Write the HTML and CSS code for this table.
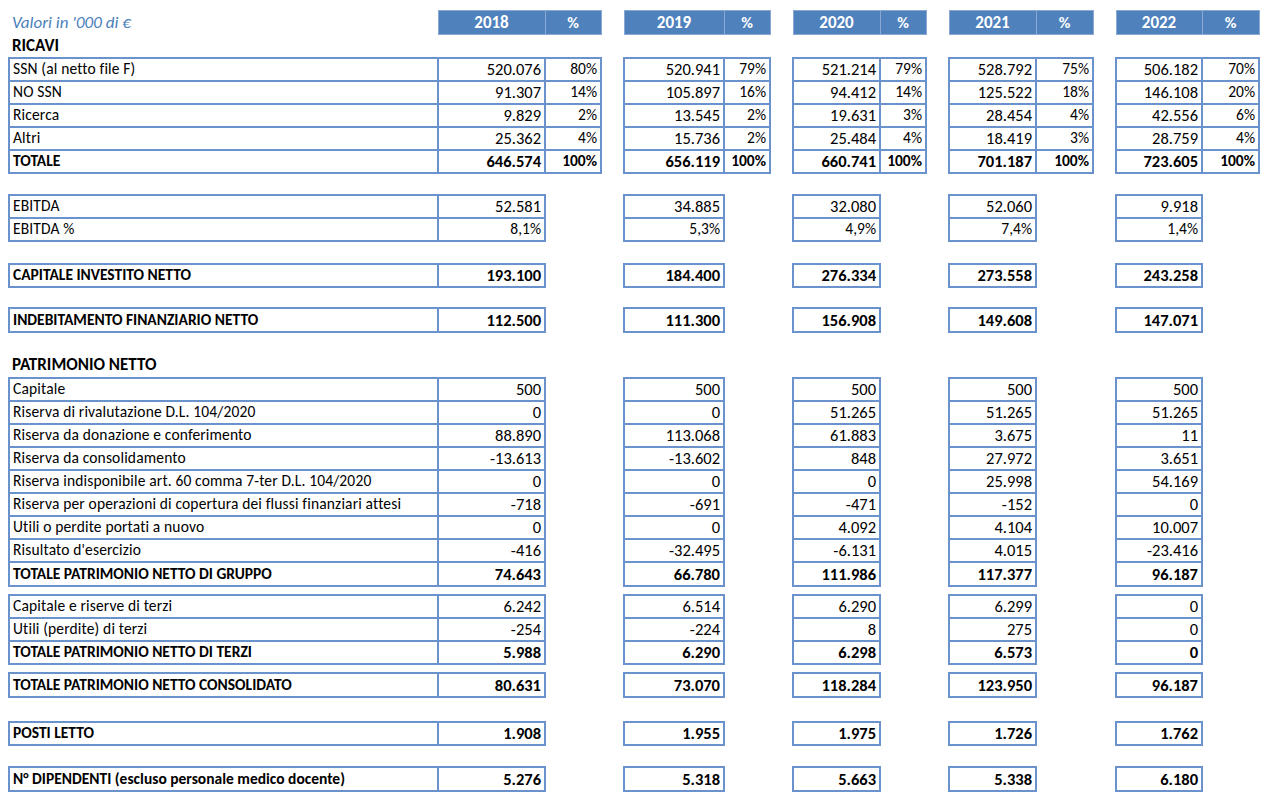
FILE: index.html
```html
<!DOCTYPE html>
<html lang="it">
<head>
<meta charset="utf-8">
<title>Valori in '000 di €</title>
<link rel="stylesheet" href="styles.css">
</head>
<body>
<table class="sheet">
  <colgroup>
    <col class="c-label">
    <col class="c-v18"><col class="c-p18"><col class="c-gap">
    <col class="c-v19"><col class="c-p19"><col class="c-gap">
    <col class="c-v20"><col class="c-p20"><col class="c-gap">
    <col class="c-v21"><col class="c-p21"><col class="c-gap">
    <col class="c-v22"><col class="c-p22">
  </colgroup>
  <tbody>
    <tr class="r-head">
      <td class="title">Valori in '000 di €</td>
      <td class="hd">2018</td><td class="hd hp">%</td><td></td>
      <td class="hd">2019</td><td class="hd hp">%</td><td></td>
      <td class="hd">2020</td><td class="hd hp">%</td><td></td>
      <td class="hd">2021</td><td class="hd hp">%</td><td></td>
      <td class="hd">2022</td><td class="hd hp">%</td>
    </tr>
    <tr class="r"><td class="sec" colspan="15">RICAVI</td></tr>
    <tr class="r">
      <td class="b lab">SSN (al netto file F)</td>
      <td class="b num">520.076</td><td class="b num pct">80%</td><td></td>
      <td class="b num">520.941</td><td class="b num pct">79%</td><td></td>
      <td class="b num">521.214</td><td class="b num pct">79%</td><td></td>
      <td class="b num">528.792</td><td class="b num pct">75%</td><td></td>
      <td class="b num">506.182</td><td class="b num pct">70%</td>
    </tr>
    <tr class="r">
      <td class="b lab">NO SSN</td>
      <td class="b num">91.307</td><td class="b num pct">14%</td><td></td>
      <td class="b num">105.897</td><td class="b num pct">16%</td><td></td>
      <td class="b num">94.412</td><td class="b num pct">14%</td><td></td>
      <td class="b num">125.522</td><td class="b num pct">18%</td><td></td>
      <td class="b num">146.108</td><td class="b num pct">20%</td>
    </tr>
    <tr class="r">
      <td class="b lab">Ricerca</td>
      <td class="b num">9.829</td><td class="b num pct">2%</td><td></td>
      <td class="b num">13.545</td><td class="b num pct">2%</td><td></td>
      <td class="b num">19.631</td><td class="b num pct">3%</td><td></td>
      <td class="b num">28.454</td><td class="b num pct">4%</td><td></td>
      <td class="b num">42.556</td><td class="b num pct">6%</td>
    </tr>
    <tr class="r">
      <td class="b lab">Altri</td>
      <td class="b num">25.362</td><td class="b num pct">4%</td><td></td>
      <td class="b num">15.736</td><td class="b num pct">2%</td><td></td>
      <td class="b num">25.484</td><td class="b num pct">4%</td><td></td>
      <td class="b num">18.419</td><td class="b num pct">3%</td><td></td>
      <td class="b num">28.759</td><td class="b num pct">4%</td>
    </tr>
    <tr class="r bold">
      <td class="b lab">TOTALE</td>
      <td class="b num">646.574</td><td class="b num pct">100%</td><td></td>
      <td class="b num">656.119</td><td class="b num pct">100%</td><td></td>
      <td class="b num">660.741</td><td class="b num pct">100%</td><td></td>
      <td class="b num">701.187</td><td class="b num pct">100%</td><td></td>
      <td class="b num">723.605</td><td class="b num pct">100%</td>
    </tr>
    <tr class="sp22"><td colspan="15"></td></tr>
    <tr class="r">
      <td class="b lab">EBITDA</td>
      <td class="b num">52.581</td><td></td><td></td>
      <td class="b num">34.885</td><td></td><td></td>
      <td class="b num">32.080</td><td></td><td></td>
      <td class="b num">52.060</td><td></td><td></td>
      <td class="b num">9.918</td><td></td>
    </tr>
    <tr class="r">
      <td class="b lab">EBITDA %</td>
      <td class="b num pct">8,1%</td><td></td><td></td>
      <td class="b num pct">5,3%</td><td></td><td></td>
      <td class="b num pct">4,9%</td><td></td><td></td>
      <td class="b num pct">7,4%</td><td></td><td></td>
      <td class="b num pct">1,4%</td><td></td>
    </tr>
    <tr class="sp23"><td colspan="15"></td></tr>
    <tr class="r bold">
      <td class="b lab">CAPITALE INVESTITO NETTO</td>
      <td class="b num">193.100</td><td></td><td></td>
      <td class="b num">184.400</td><td></td><td></td>
      <td class="b num">276.334</td><td></td><td></td>
      <td class="b num">273.558</td><td></td><td></td>
      <td class="b num">243.258</td><td></td>
    </tr>
    <tr class="sp21"><td colspan="15"></td></tr>
    <tr class="r r24 bold">
      <td class="b lab">INDEBITAMENTO FINANZIARIO NETTO</td>
      <td class="b num">112.500</td><td></td><td></td>
      <td class="b num">111.300</td><td></td><td></td>
      <td class="b num">156.908</td><td></td><td></td>
      <td class="b num">149.608</td><td></td><td></td>
      <td class="b num">147.071</td><td></td>
    </tr>
    <tr class="sp22"><td colspan="15"></td></tr>
    <tr class="r r24"><td class="sec" colspan="15">PATRIMONIO NETTO</td></tr>
    <tr class="r">
      <td class="b lab">Capitale</td>
      <td class="b num">500</td><td></td><td></td>
      <td class="b num">500</td><td></td><td></td>
      <td class="b num">500</td><td></td><td></td>
      <td class="b num">500</td><td></td><td></td>
      <td class="b num">500</td><td></td>
    </tr>
    <tr class="r">
      <td class="b lab">Riserva di rivalutazione D.L. 104/2020</td>
      <td class="b num">0</td><td></td><td></td>
      <td class="b num">0</td><td></td><td></td>
      <td class="b num">51.265</td><td></td><td></td>
      <td class="b num">51.265</td><td></td><td></td>
      <td class="b num">51.265</td><td></td>
    </tr>
    <tr class="r">
      <td class="b lab">Riserva da donazione e conferimento</td>
      <td class="b num">88.890</td><td></td><td></td>
      <td class="b num">113.068</td><td></td><td></td>
      <td class="b num">61.883</td><td></td><td></td>
      <td class="b num">3.675</td><td></td><td></td>
      <td class="b num">11</td><td></td>
    </tr>
    <tr class="r">
      <td class="b lab">Riserva da consolidamento</td>
      <td class="b num">-13.613</td><td></td><td></td>
      <td class="b num">-13.602</td><td></td><td></td>
      <td class="b num">848</td><td></td><td></td>
      <td class="b num">27.972</td><td></td><td></td>
      <td class="b num">3.651</td><td></td>
    </tr>
    <tr class="r">
      <td class="b lab">Riserva indisponibile art. 60 comma 7-ter D.L. 104/2020</td>
      <td class="b num">0</td><td></td><td></td>
      <td class="b num">0</td><td></td><td></td>
      <td class="b num">0</td><td></td><td></td>
      <td class="b num">25.998</td><td></td><td></td>
      <td class="b num">54.169</td><td></td>
    </tr>
    <tr class="r">
      <td class="b lab">Riserva per operazioni di copertura dei flussi finanziari attesi</td>
      <td class="b num">-718</td><td></td><td></td>
      <td class="b num">-691</td><td></td><td></td>
      <td class="b num">-471</td><td></td><td></td>
      <td class="b num">-152</td><td></td><td></td>
      <td class="b num">0</td><td></td>
    </tr>
    <tr class="r">
      <td class="b lab">Utili o perdite portati a nuovo</td>
      <td class="b num">0</td><td></td><td></td>
      <td class="b num">0</td><td></td><td></td>
      <td class="b num">4.092</td><td></td><td></td>
      <td class="b num">4.104</td><td></td><td></td>
      <td class="b num">10.007</td><td></td>
    </tr>
    <tr class="r">
      <td class="b lab">Risultato d'esercizio</td>
      <td class="b num">-416</td><td></td><td></td>
      <td class="b num">-32.495</td><td></td><td></td>
      <td class="b num">-6.131</td><td></td><td></td>
      <td class="b num">4.015</td><td></td><td></td>
      <td class="b num">-23.416</td><td></td>
    </tr>
    <tr class="r r24 bold">
      <td class="b lab">TOTALE PATRIMONIO NETTO DI GRUPPO</td>
      <td class="b num">74.643</td><td></td><td></td>
      <td class="b num">66.780</td><td></td><td></td>
      <td class="b num">111.986</td><td></td><td></td>
      <td class="b num">117.377</td><td></td><td></td>
      <td class="b num">96.187</td><td></td>
    </tr>
    <tr class="sp9"><td colspan="15"></td></tr>
    <tr class="r">
      <td class="b lab">Capitale e riserve di terzi</td>
      <td class="b num">6.242</td><td></td><td></td>
      <td class="b num">6.514</td><td></td><td></td>
      <td class="b num">6.290</td><td></td><td></td>
      <td class="b num">6.299</td><td></td><td></td>
      <td class="b num">0</td><td></td>
    </tr>
    <tr class="r">
      <td class="b lab">Utili (perdite) di terzi</td>
      <td class="b num">-254</td><td></td><td></td>
      <td class="b num">-224</td><td></td><td></td>
      <td class="b num">8</td><td></td><td></td>
      <td class="b num">275</td><td></td><td></td>
      <td class="b num">0</td><td></td>
    </tr>
    <tr class="r bold">
      <td class="b lab">TOTALE PATRIMONIO NETTO DI TERZI</td>
      <td class="b num">5.988</td><td></td><td></td>
      <td class="b num">6.290</td><td></td><td></td>
      <td class="b num">6.298</td><td></td><td></td>
      <td class="b num">6.573</td><td></td><td></td>
      <td class="b num">0</td><td></td>
    </tr>
    <tr class="sp9"><td colspan="15"></td></tr>
    <tr class="r r24 bold">
      <td class="b lab">TOTALE PATRIMONIO NETTO CONSOLIDATO</td>
      <td class="b num">80.631</td><td></td><td></td>
      <td class="b num">73.070</td><td></td><td></td>
      <td class="b num">118.284</td><td></td><td></td>
      <td class="b num">123.950</td><td></td><td></td>
      <td class="b num">96.187</td><td></td>
    </tr>
    <tr class="sp25"><td colspan="15"></td></tr>
    <tr class="r bold">
      <td class="b lab">POSTI LETTO</td>
      <td class="b num">1.908</td><td></td><td></td>
      <td class="b num">1.955</td><td></td><td></td>
      <td class="b num">1.975</td><td></td><td></td>
      <td class="b num">1.726</td><td></td><td></td>
      <td class="b num">1.762</td><td></td>
    </tr>
    <tr class="sp22"><td colspan="15"></td></tr>
    <tr class="r r24 bold">
      <td class="b lab">N° DIPENDENTI (escluso personale medico docente)</td>
      <td class="b num">5.276</td><td></td><td></td>
      <td class="b num">5.318</td><td></td><td></td>
      <td class="b num">5.663</td><td></td><td></td>
      <td class="b num">5.338</td><td></td><td></td>
      <td class="b num">6.180</td><td></td>
    </tr>
  </tbody>
</table>
</body>
</html>
```

FILE: styles.css
```css
html, body {
  background: #ffffff;
}
body {
  margin: 0;
  padding: 10px 0 0 8px;
  font-family: "Carlito", "Lato", "Liberation Sans", sans-serif;
  font-size: 15.5px;
  color: #000000;
}
.sheet {
  border-collapse: collapse;
  table-layout: fixed;
  width: 1250px;
}
.c-label { width: 429px; }
.c-v18 { width: 107px; }
.c-p18 { width: 56px; }
.c-gap { width: 23px; }
.c-v19 { width: 100px; }
.c-p19 { width: 46px; }
.c-v20 { width: 87px; }
.c-p20 { width: 46px; }
.c-v21 { width: 87px; }
.c-p21 { width: 57px; }
.c-v22 { width: 86px; }
.c-p22 { width: 57px; }

.sheet td {
  padding: 0 3px;
  white-space: nowrap;
  overflow: hidden;
  line-height: 16px;
  vertical-align: middle;
}
.r-head { height: 24px; }
.r { height: 23px; }
.r.r24 { height: 24px; }
.sp9 { height: 9px; }
.sp21 { height: 21px; }
.sp22 { height: 22px; }
.sp23 { height: 23px; }
.sp25 { height: 25px; }
.sp9 td, .sp21 td, .sp22 td, .sp23 td, .sp25 td { padding: 0; line-height: 0; }

.title {
  font-style: italic;
  font-size: 17px;
  color: #4a7ebb;
  padding-left: 4px;
}
.hd {
  background: #4f81bd;
  color: #ffffff;
  font-weight: 700;
  font-size: 17px;
  text-align: center;
  border: 1px solid #8aa9d4;
}
.hd.hp {
  font-size: 16px;
}
.sec {
  font-weight: 700;
  font-size: 17px;
}
.b {
  border: 2px solid #6a92cc;
}
.lab {
  letter-spacing: 0.15px;
}
.bold .lab {
  letter-spacing: 0;
}
.num {
  text-align: right;
  font-size: 16.5px;
  padding-right: 4px;
}
.num.pct {
  font-size: 15.5px;
}
.bold td {
  font-weight: 700;
}
```
